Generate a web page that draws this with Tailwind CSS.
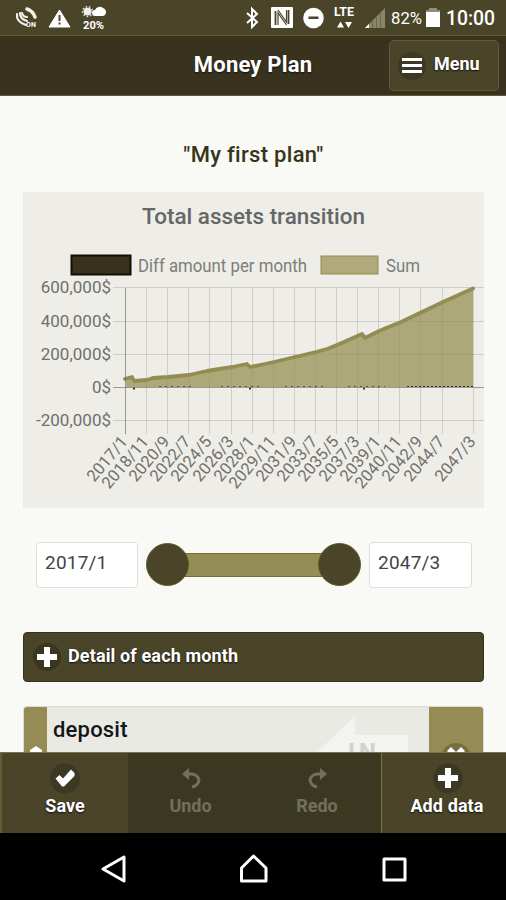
<!DOCTYPE html>
<html lang="en">
<head>
    <meta charset="UTF-8">
    <meta name="viewport" content="width=device-width, initial-scale=1.0">
    <title>Money Plan</title>
    <script src="https://cdn.jsdelivr.net/npm/@tailwindcss/browser@4"></script>
</head>
<body class="bg-[#f9faf5] font-[Roboto,sans-serif] w-[506px] h-[900px] flex flex-col overflow-hidden">
    <!-- Status bar -->
    <div class="h-[35px] shrink-0 bg-[#4a4529]">
        <svg class="block" width="506" height="35" fill="#fff" font-family="Roboto, sans-serif">
            <g fill="none" stroke="#f2f2ea" stroke-linecap="round">
                <path d="M17 14q-1 8 9 11M20 13q0 6 7 8" stroke-width="2.200"/>
                <path d="M22 13q1 4 5 4" stroke-width="2.200"/>
                <path d="M27 9q6 2 8 8" stroke-width="3.500"/>
            </g>
            <text x="26" y="27" font-size="7" font-weight="700" textLength="10">ON</text>
            <path d="M59.500 10L70 27H49z" stroke="#fff" stroke-linejoin="round"/>
            <path d="M58.500 15h2v6h-2zM58.500 22.500h2v2h-2z" fill="#4a4529"/>
            <circle cx="87.500" cy="11.500" r="4" fill="#eee"/>
            <circle cx="87.500" cy="11.500" r="5" fill="none" stroke="#ddd" stroke-width="1.500" stroke-dasharray="1.500 2"/>
            <path d="M95 16a3 3 0 0 1 0-6a5 5 0 0 1 8-2q3 1 3 4t-3 4h-8z"/>
            <text x="83" y="28.500" font-size="11" font-weight="700" textLength="21" lengthAdjust="spacingAndGlyphs">20%</text>
            <path d="M247 13l10 9-5 5V9l5 5-10 9" fill="none" stroke="#fff" stroke-width="2"/>
            <rect x="271" y="7" width="22" height="21" rx="1"/>
            <path d="M275.500 25V11M288.500 10v14" fill="none" stroke="#4a4529" stroke-width="1.800"/>
            <path d="M278 10l8.500 12V10M278 25V13l8.500 12" fill="none" stroke="#4a4529" stroke-width="1.200"/>
            <circle cx="313.500" cy="18" r="10.300"/>
            <rect x="308.500" y="16.500" width="10" height="2.500" fill="#4a4529"/>
            <text x="334" y="16" font-size="13" font-weight="700" textLength="20" lengthAdjust="spacingAndGlyphs">LTE</text>
            <path d="M337 27.500l3.500-6 3.500 6zM345 22h7l-3.500 6z"/>
            <path d="M385 8v20h-20z" fill="#89866d"/>
            <path d="M369 24v4h-4z"/>
            <path d="M372.500 20v8M376.500 16v12M380.500 12v16" stroke="#6b6748"/>
            <text x="391" y="24" font-size="17" textLength="31" lengthAdjust="spacingAndGlyphs">82%</text>
            <path d="M429 8h8v2h3v3h-14v-3h3z" fill="#918e75"/>
            <rect x="426" y="12" width="14" height="15"/>
            <text x="446" y="25" font-size="20" font-weight="500" textLength="49" lengthAdjust="spacingAndGlyphs">10:00</text>
        </svg>
    </div>

    <!-- Header -->
    <header class="h-[61px] shrink-0 bg-[#39321f] border-t border-b border-t-[#5f5935] border-b-[#5f5935] grid grid-cols-[1fr_120px_1fr] items-center text-white">
        <span></span>
        <h1 class="pb-[2px] text-[22px] leading-none tracking-[.2px] font-bold text-center whitespace-nowrap justify-self-center [text-shadow:0_1px_2px_#111]">Money Plan</h1>
        <button class="justify-self-end mr-[7px] w-[110px] h-[51px] rounded-[5px] border border-[#625c35] bg-[#4a4429] flex items-center pl-[8px] gap-[8px]">
            <span class="size-[28px] rounded-full bg-[#3d3822] flex flex-col items-center justify-center gap-[3px]">
                <i class="w-[20px] h-[3px] bg-white"></i>
                <i class="w-[20px] h-[3px] bg-white"></i>
                <i class="w-[20px] h-[3px] bg-white"></i>
            </span>
            <span class="text-[18px] leading-none font-bold pb-[4px] [text-shadow:0_1px_2px_#111]">Menu</span>
        </button>
    </header>

    <main class="h-[656px] shrink-0 overflow-hidden pl-[23px] pr-[22px] flex flex-col">
        <h2 class="mt-[47px] text-[22px] leading-[24px] tracking-[.3px] font-medium text-center text-[#38341a]">"My first plan"</h2>

        <!-- Chart -->
        <svg class="block mt-[25px] shrink-0" width="461" height="316" font-family="Roboto, sans-serif" fill="#666">
            <rect width="461" height="316" fill="#eeede7"/>
            <text x="119" y="32" font-size="22" font-weight="500" textLength="223" lengthAdjust="spacingAndGlyphs">Total assets transition</text>
            <rect x="48.500" y="63.500" width="59" height="19" fill="#39331d" stroke="#111006" stroke-width="2"/>
            <text x="115" y="80" font-size="17.500" fill="#7d7d7a" textLength="169" lengthAdjust="spacingAndGlyphs">Diff amount per month</text>
            <rect x="298" y="64" width="57" height="18" fill="#afa97b" stroke="#948d51"/>
            <text x="363" y="80" font-size="17.500" fill="#7d7d7a" textLength="34" lengthAdjust="spacingAndGlyphs">Sum</text>
            <g id="grid" stroke="#000" stroke-opacity=".13"></g>
            <path d="M103 187L109 185 111 189 124 188 130 186 145 185 166 183 184 179 209 175 224 172 227 175 237 173 251 170 272 165 293 160 304 157 314 153 339 142 342 146 356 139 378 130 399 120 420 110 450 96V195H103z" fill="#948d51" fill-opacity=".72"/>
            <path d="M102 187L109 185 111 189 124 188 130 186 145 185 166 183 184 179 209 175 224 172 227 175 237 173 251 170 272 165 293 160 304 157 314 153 339 142 342 146 356 139 378 130 399 120 420 110 450 96.500" fill="none" stroke="#948d51" stroke-width="3.800" stroke-linejoin="round" stroke-linecap="round"/>
            <path d="M136 194.500H172M198 194.500H236M262 194.500H300M325 194.500H362" stroke="#5a5433" stroke-dasharray="2 4"/>
            <path d="M384 194.500H450" stroke="#3c3620" stroke-dasharray="2 2"/>
            <path d="M110 196.500h2M226 196.500h2M340 196.500h2" stroke="#3c3620" stroke-width="2"/>
            <path d="M102.500 96V242M90 195.500H461" stroke="#666" stroke-opacity=".5"/>
            <g id="amounts" font-size="17" fill="#70706d" text-anchor="end"></g>
            <g id="months" font-size="16.500" fill="#70706d" text-anchor="end"></g>
        </svg>

        <!-- Period slider -->
        <div class="mt-[34px] ml-[13px] mr-[12px] h-[46px] shrink-0 flex items-center">
            <div class="w-[102px] h-[46px] rounded-[4px] border border-[#dedfda] bg-white pl-[8px] pb-[3px] flex items-center text-[19px] tracking-[.2px] text-[#444]">2017/1</div>
            <div class="ml-[8px] pb-[1px] w-[215px] flex items-center">
                <span class="z-1 size-[43px] rounded-full border border-[#5f5b23] bg-[#4a4429]"></span>
                <span class="flex-1 h-[24px] -mx-[4px] border-y border-[#76702d] bg-[#948d56]"></span>
                <span class="z-1 size-[43px] rounded-full border border-[#5f5b23] bg-[#4a4429]"></span>
            </div>
            <div class="ml-[8px] w-[103px] h-[46px] rounded-[4px] border border-[#dedfda] bg-white pl-[8px] pb-[3px] flex items-center text-[19px] tracking-[.2px] text-[#444]">2047/3</div>
        </div>

        <!-- Month detail -->
        <button class="mt-[44px] h-[50px] shrink-0 rounded-[4px] border border-[#37331a] bg-[#4a4429] text-white flex items-center pl-[9px] gap-[7px]">
            <span class="size-[28px] rounded-full bg-[#3b3620] flex items-center justify-center">
                <svg width="20" height="20" fill="#fff"><path d="M7 0h6v7h7v6h-7v7H7v-7H0V7h7z"/></svg>
            </span>
            <span class="text-[18px] leading-none tracking-[.13px] font-bold pb-[3px] [text-shadow:0_1px_2px_#111]">Detail of each month</span>
        </button>

        <div class="mt-[24px] h-[90px] shrink-0 rounded-[4px] border border-[#dcdcd4] overflow-hidden bg-[#eaeae4] flex">
            <div class="w-[23px] bg-[#948c54] flex justify-center">
                <svg width="14" height="70" fill="#fff"><path d="M1 46V43l6-4 6 4v3z"/></svg>
            </div>
            <div class="flex-1 flex justify-between">
                <span class="pl-[6px] pt-[10px] text-[22px] leading-[26px] tracking-[.2px] font-medium text-[#151515]">deposit</span>
                <svg class="mr-[21px]" width="92" height="88" font-family="Roboto, sans-serif">
                    <path d="M0 46L39 9V28H92V64H39V83z" fill="#f3f3ef"/>
                    <text x="32" y="53" font-size="24" font-weight="700" fill="#d1d1cb" textLength="28">IN</text>
                </svg>
            </div>
            <div class="w-[54px] bg-[#948c54] flex justify-center">
                <svg width="32" height="70" fill="#fff"><circle cx="16" cy="51" r="15" fill="#776f3d"/><path d="M7 44l4-4 5 5 5-5 4 4-7 7h-4z"/></svg>
            </div>
        </div>
    </main>

    <!-- Actions -->
    <div class="h-[81px] shrink-0 border-t border-[#777347] bg-[#4a4429] grid grid-cols-[128px_125px_128px_125px] text-[18px] leading-[20px] font-bold text-center text-white">
        <button class="border-l-2 border-[#625c35] flex flex-col items-center pt-[10px] gap-[1px] [text-shadow:0_1px_2px_#111]">
            <svg width="30" height="32"><circle cx="15" cy="15.500" r="15" fill="#3d3822"/><path d="M5.500 15.500l4-3.500 3.500 3.500 8-9 3.500 3.500v3L14 23.500h-2z" fill="#fff"/></svg>
            Save
        </button>
        <button class="bg-[#3b3821] text-[#72705c] flex flex-col items-center pt-[10px] gap-[1px]">
            <svg width="30" height="32" fill="none" stroke="#72705c" stroke-width="3"><path d="M12 11h4q6 1 7 6q-1 6-7 7"/><path d="M13 5v12L6 11z" fill="#72705c" stroke="none"/></svg>
            Undo
        </button>
        <button class="bg-[#3b3821] text-[#72705c] flex flex-col items-center pt-[10px] gap-[1px]">
            <svg width="30" height="32" fill="none" stroke="#72705c" stroke-width="3"><path d="M19 11h-4q-6 1-7 6q1 6 7 7"/><path d="M18 5v12l7-6z" fill="#72705c" stroke="none"/></svg>
            Redo
        </button>
        <button class="border-l border-[#777347] flex flex-col items-center pl-[6px] pt-[10px] gap-[1px] [text-shadow:0_1px_2px_#111]">
            <svg class="ml-[1px]" width="30" height="32"><circle cx="15" cy="15.500" r="15" fill="#3d3822"/><path d="M12 5h6v7h7v6h-7v7h-6v-7H5v-6h7z" fill="#fff"/></svg>
            <span class="tracking-[.1px]">Add data</span>
        </button>
    </div>

    <!-- Android navigation -->
    <nav class="flex-1 bg-black">
        <svg class="block" width="506" height="67" fill="none" stroke="#fff" stroke-width="3" stroke-linejoin="round">
            <path d="M124 24v24l-21-12z"/>
            <path d="M241.500 48V35L253.500 23 266 35V48z"/>
            <rect x="384" y="26" width="21" height="21"/>
        </svg>
    </nav>

    <script>
        const amounts = [
            ["600,000$", 95.5], ["400,000$", 129.5], ["200,000$", 162.5], ["0$", 195.5], ["-200,000$", 228.5]
        ];
        const months = ["2017/1", "2018/11", "2020/9", "2022/7", "2024/5", "2026/3", "2028/1", "2029/11", "2031/9",
            "2033/7", "2035/5", "2037/3", "2039/1", "2040/11", "2042/9", "2044/7", "2047/3"];
        let grid = "";

        document.getElementById("amounts").innerHTML = amounts.map(([label, y]) => {
            grid += `<path d="M90 ${y}H461"/>`;
            return `<text x="88" y="${y + 5}">${label}</text>`;
        }).join("");

        document.getElementById("months").innerHTML = months.map((label, i) => {
            // the last tick is the end of the range, not a full step
            const x = i === 16 ? 450.5 : Math.round(102 + i * 21.1) + 0.5;
            grid += `<path d="M${x} 96V242"/>`;
            return `<text transform="translate(${x + 3} 250) rotate(-50)">${label}</text>`;
        }).join("");

        document.getElementById("grid").innerHTML = grid;
    </script>
</body>
</html>
